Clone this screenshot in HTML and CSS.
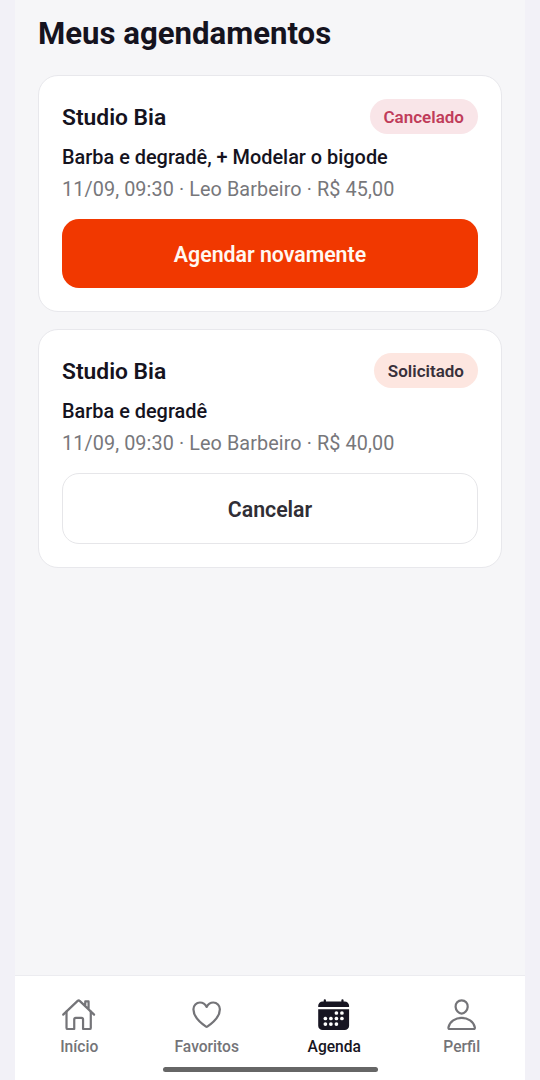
FILE: index.html
```html
<!DOCTYPE html>
<html lang="pt-BR">
<head>
<meta charset="utf-8">
<meta name="viewport" content="width=device-width, initial-scale=1">
<title>Meus agendamentos</title>
<link rel="stylesheet" href="styles.css">
</head>
<body>
<div class="app">
  <main class="content">
    <h1 class="title">Meus agendamentos</h1>
    <article class="card">
      <header class="card-head">
        <h2 class="shop">Studio Bia</h2>
        <span class="badge badge-cancelled">Cancelado</span>
      </header>
      <p class="services">Barba e degradê, + Modelar o bigode</p>
      <p class="details">11/09, 09:30 · Leo Barbeiro · R$ 45,00</p>
      <button class="button button-primary">Agendar novamente</button>
    </article>
    <article class="card">
      <header class="card-head">
        <h2 class="shop">Studio Bia</h2>
        <span class="badge badge-requested">Solicitado</span>
      </header>
      <p class="services">Barba e degradê</p>
      <p class="details">11/09, 09:30 · Leo Barbeiro · R$ 40,00</p>
      <button class="button button-outline">Cancelar</button>
    </article>
  </main>
  <nav class="tabs">
    <a class="tab">
      <svg class="icon" viewBox="0 0 512 512"><path d="M80 212v236a16 16 0 0016 16h96V328a24 24 0 0124-24h80a24 24 0 0124 24v136h96a16 16 0 0016-16V212"/><path d="M480 256L266.89 52c-5-5.28-16.69-5.34-21.78 0L32 256M400 179V64h-48v69"/></svg>
      <span class="tab-label">Início</span>
    </a>
    <a class="tab">
      <svg class="icon" viewBox="0 0 512 512"><path d="M352.92 80C288 80 256 144 256 144s-32-64-96.92-64c-52.76 0-94.54 44.14-95.08 96.81-1.1 109.33 86.73 187.08 183 252.42a16 16 0 0018 0c96.26-65.34 184.09-143.09 183-252.42-.54-52.67-42.32-96.81-95.08-96.81z"/></svg>
      <span class="tab-label">Favoritos</span>
    </a>
    <a class="tab tab-active">
      <svg class="icon icon-solid" viewBox="0 0 512 512"><path d="M480 128a64 64 0 00-64-64h-16V48a16 16 0 00-32 0v16H144V48a16 16 0 00-32 0v16H96a64 64 0 00-64 64v12a4 4 0 004 4h440a4 4 0 004-4zM32 416a64 64 0 0064 64h320a64 64 0 0064-64V179a3 3 0 00-3-3H35a3 3 0 00-3 3z"/><g class="icon-dots"><circle cx="296" cy="232" r="27"/><circle cx="376" cy="232" r="27"/><circle cx="136" cy="312" r="27"/><circle cx="216" cy="312" r="27"/><circle cx="296" cy="312" r="27"/><circle cx="376" cy="312" r="27"/><circle cx="136" cy="392" r="27"/><circle cx="216" cy="392" r="27"/><circle cx="296" cy="392" r="27"/></g></svg>
      <span class="tab-label">Agenda</span>
    </a>
    <a class="tab">
      <svg class="icon" viewBox="0 0 512 512"><path d="M344 144c-3.92 52.87-44 96-88 96s-84.15-43.12-88-96c-4-55 35-96 88-96s92 42 88 96z"/><path d="M256 304c-87 0-175.3 48-191.64 138.6C62.39 453.52 68.57 464 80 464h352c11.44 0 17.62-10.48 15.65-21.4C431.3 352 343 304 256 304z"/></svg>
      <span class="tab-label">Perfil</span>
    </a>
    <div class="home-indicator"></div>
  </nav>
</div>
</body>
</html>
```
FILE: styles.css
```css
* { box-sizing: border-box; }
body {
  margin: 0;
  padding: 0 15px;
  background: #f2f1f7;
  font-family: Roboto, sans-serif;
  color: #15131e;
}
.app {
  height: 1080px;
  display: flex;
  flex-direction: column;
  background: #f6f6f8;
}
.content {
  flex: 1;
  padding: 14px 23px 0;
}
.title {
  margin: 0 0 22px;
  font-size: 31.15px;
  line-height: 39px;
  font-weight: 700;
}
.card {
  margin-bottom: 17px;
  padding: 23px;
  border: 1px solid #e8e8ec;
  border-radius: 20px;
  background: #fff;
}
.card-head {
  display: flex;
  justify-content: space-between;
  align-items: center;
  height: 35px;
}
.shop {
  margin: 3px 0 0;
  font-size: 22.8px;
  line-height: 28px;
  font-weight: 600;
}
.badge {
  padding: 0 14px;
  border-radius: 18px;
  font-size: 17px;
  line-height: 36px;
  height: 35px;
  font-weight: 600;
}
.badge-cancelled { background: #f9e5e8; color: #c03c5a; }
.badge-requested { background: #fde6e0; color: #38303a; }
.services {
  margin: 10px 0 0;
  font-size: 19.9px;
  line-height: 28px;
  font-weight: 500;
}
.details {
  margin: 4px 0 0;
  font-size: 19.8px;
  letter-spacing: 0.1px;
  line-height: 28px;
  color: #77777b;
}
.button {
  display: block;
  width: 100%;
  height: 69px;
  margin-top: 15px;
  padding: 2px 0 0;
  border: 0;
  border-radius: 17px;
  font: 600 21.3px Roboto, sans-serif;
}
.button-primary { background: #f13800; color: #fff8f2; }
.button-outline {
  height: 71px;
  border: 1px solid #e6e6e9;
  background: #fff;
  color: #302e35;
}
.tabs {
  position: relative;
  display: flex;
  height: 105px;
  padding-top: 21px;
  border-top: 1px solid #ececf0;
  background: #fff;
}
.tab {
  flex: 1;
  display: flex;
  flex-direction: column;
  align-items: center;
  color: #747478;
}
.tab-active { color: #171522; }
.icon {
  width: 35.3px;
  height: 35.3px;
  fill: none;
  stroke: currentColor;
  stroke-width: 32;
  stroke-linejoin: round;
  stroke-linecap: round;
}
.icon-solid { fill: currentColor; stroke: none; }
.icon-dots { fill: #fff; }
.tab-label {
  margin-top: 4px;
  padding-left: 1px;
  font-size: 15.6px;
  line-height: 22px;
  font-weight: 500;
}
.home-indicator {
  position: absolute;
  left: 148px;
  bottom: 8px;
  width: 215px;
  height: 5px;
  border-radius: 3px;
  background: #666;
}
```
